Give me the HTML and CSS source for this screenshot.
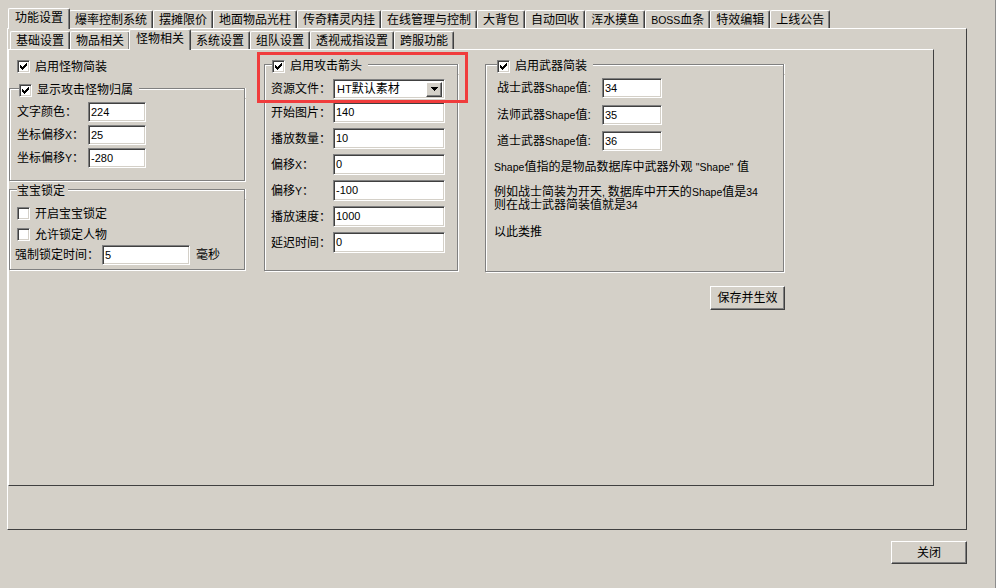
FILE: index.html
```html
<!DOCTYPE html>
<html>
<head>
<meta charset="utf-8">
<link rel="stylesheet" href="styles.css">
</head>
<body>
<div class="window">
  <div class="tabs">
    <div class="tab sel">功能设置</div>
    <div class="tab">爆率控制系统</div>
    <div class="tab">摆摊限价</div>
    <div class="tab">地面物品光柱</div>
    <div class="tab">传奇精灵内挂</div>
    <div class="tab">在线管理与控制</div>
    <div class="tab">大背包</div>
    <div class="tab">自动回收</div>
    <div class="tab">浑水摸鱼</div>
    <div class="tab"><span class="en">BOSS</span>血条</div>
    <div class="tab">特效编辑</div>
    <div class="tab">上线公告</div>
  </div>
  <div class="panel outer-panel">
    <div class="tabs">
      <div class="tab">基础设置</div>
      <div class="tab">物品相关</div>
      <div class="tab sel">怪物相关</div>
      <div class="tab">系统设置</div>
      <div class="tab">组队设置</div>
      <div class="tab">透视戒指设置</div>
      <div class="tab">跨服功能</div>
    </div>
    <div class="panel inner-panel">
      <div class="col col-left">
        <div class="check top-check"><span class="box"><svg width="7" height="7" viewBox="0 0 7 7" shape-rendering="crispEdges"><polygon points="0,2 2,4 6,0 7,0 7,3 2,7 0,5" fill="#000"/></svg></span><span>启用怪物简装</span></div>
        <div class="group">
          <div class="group-head head-g1"><span class="box"><svg width="7" height="7" viewBox="0 0 7 7" shape-rendering="crispEdges"><polygon points="0,2 2,4 6,0 7,0 7,3 2,7 0,5" fill="#000"/></svg></span><span class="gtitle">显示攻击怪物归属</span></div>
          <div class="group-body body-g1">
            <div class="field"><span class="lbl lbl-l">文字颜色：</span><span class="input in-l">224</span></div>
            <div class="field"><span class="lbl lbl-l">坐标偏移<span class="en">X</span>：</span><span class="input in-l">25</span></div>
            <div class="field"><span class="lbl lbl-l">坐标偏移<span class="en">Y</span>：</span><span class="input in-l">-280</span></div>
          </div>
        </div>
        <div class="group g2">
          <div class="group-head head-g2"><span class="gtitle">宝宝锁定</span></div>
          <div class="group-body body-g2">
            <div class="check"><span class="box"></span><span>开启宝宝锁定</span></div>
            <div class="check check-2"><span class="box"></span><span>允许锁定人物</span></div>
            <div class="field field-lock"><span class="lbl lbl-lock">强制锁定时间：</span><span class="input in-lock">5</span><span class="unit">毫秒</span></div>
          </div>
        </div>
      </div>

      <div class="col col-mid">
        <div class="group">
          <div class="group-head head-mid"><span class="box"><svg width="7" height="7" viewBox="0 0 7 7" shape-rendering="crispEdges"><polygon points="0,2 2,4 6,0 7,0 7,3 2,7 0,5" fill="#000"/></svg></span><span class="gtitle">启用攻击箭头</span></div>
          <div class="group-body body-mid">
            <div class="field"><span class="lbl lbl-m">资源文件：</span><span class="input combo"><span class="combo-text"><span class="en">HT</span>默认素材</span><span class="drop"><svg width="7" height="4" viewBox="0 0 7 4" shape-rendering="crispEdges"><polygon points="0,0 7,0 3.5,4" fill="#000"/></svg></span></span></div>
            <div class="field fm first"><span class="lbl lbl-m">开始图片：</span><span class="input in-m">140</span></div>
            <div class="field fm"><span class="lbl lbl-m">播放数量：</span><span class="input in-m">10</span></div>
            <div class="field fm"><span class="lbl lbl-m">偏移<span class="en">X</span>：</span><span class="input in-m">0</span></div>
            <div class="field fm"><span class="lbl lbl-m">偏移<span class="en">Y</span>：</span><span class="input in-m">-100</span></div>
            <div class="field fm"><span class="lbl lbl-m">播放速度：</span><span class="input in-m">1000</span></div>
            <div class="field fm"><span class="lbl lbl-m">延迟时间：</span><span class="input in-m">0</span></div>
          </div>
        </div>
      </div>

      <div class="col col-right">
        <div class="group">
          <div class="group-head head-right"><span class="box"><svg width="7" height="7" viewBox="0 0 7 7" shape-rendering="crispEdges"><polygon points="0,2 2,4 6,0 7,0 7,3 2,7 0,5" fill="#000"/></svg></span><span class="gtitle">启用武器简装</span></div>
          <div class="group-body body-right">
            <div class="field"><span class="lbl lbl-r">战士武器<span class="en">Shape</span>值:</span><span class="input in-r">34</span></div>
            <div class="field fr2"><span class="lbl lbl-r">法师武器<span class="en">Shape</span>值:</span><span class="input in-r">35</span></div>
            <div class="field fr3"><span class="lbl lbl-r">道士武器<span class="en">Shape</span>值:</span><span class="input in-r">36</span></div>
            <p class="note n1"><span class="en">Shape</span>值指的是物品数据库中武器外观 <span class="en">"Shape"</span> 值</p>
            <p class="note n2">例如战士简装为开天<span class="en">, </span>数据库中开天的<span class="en">Shape</span>值是<span class="en">34</span><br>则在战士武器简装值就是<span class="en">34</span></p>
            <p class="note n3">以此类推</p>
          </div>
        </div>
        <div class="btn btn-save">保存并生效</div>
      </div>

      <div class="annot"></div>
    </div>
  </div>
  <div class="footer"><div class="btn btn-close">关闭</div></div>
</div>
</body>
</html>
```
FILE: styles.css
```css
html, body {
  margin: 0;
  padding: 0;
  background: #d4d0c8;
}
body {
  font: 12px/14px "Liberation Sans", "Noto Sans CJK SC", sans-serif;
  color: #000;
}
.en {
  font-size: 10.5px;
}
.window {
  width: 996px;
  height: 588px;
  box-sizing: border-box;
  border-right: 1px solid #8c8c8c;
  padding: 8px 0 0 7px;
  overflow: hidden;
}

/* tabs */
.tabs {
  display: flex;
  align-items: flex-end;
  height: 20px;
  padding-left: 2px;
}
.tab {
  height: 18px;
  box-sizing: border-box;
  padding: 1px 5px 0;
  line-height: 16px;
  border-top: 1px solid #fff;
  border-left: 1px solid #fff;
  border-right: 1px solid #404040;
  box-shadow: inset -1px 0 #808080;
  border-radius: 2px 2px 0 0;
  white-space: nowrap;
  background: #d4d0c8;
}
.tab.sel {
  height: 21px;
  margin: 0 -1px -1px;
  padding: 0 6px;
  line-height: 18px;
  position: relative;
  z-index: 2;
}

/* panels */
.panel {
  box-sizing: border-box;
  border-top: 1px solid #fff;
  border-left: 1px solid #fff;
  border-right: 1px solid #404040;
  border-bottom: 1px solid #404040;
}
.outer-panel {
  width: 960px;
  height: 502px;
}
.inner-panel {
  width: 926px;
  height: 437px;
  display: flex;
  align-items: flex-start;
  position: relative;
}
.footer {
  width: 960px;
  display: flex;
  justify-content: flex-end;
  margin-top: 11px;
}

/* columns */
.col {
  display: flex;
  flex-direction: column;
}
.col-left { width: 236px; }
.col-mid { width: 194px; margin-left: 19px; }
.col-right { width: 299px; margin-left: 27px; }

/* checkbox */
.check {
  display: flex;
  align-items: center;
  height: 13px;
}
.box {
  width: 13px;
  height: 13px;
  box-sizing: border-box;
  flex: none;
  background: #fff;
  border: 1px solid;
  border-color: #808080 #fff #fff #808080;
  box-shadow: inset 1px 1px #404040, inset -1px -1px #d4d0c8;
  display: flex;
  align-items: center;
  justify-content: center;
  margin-right: 5px;
}
.box svg { display: block; }
.top-check {
  margin: 10px 0 0 8px;
}

/* group boxes */
.group {
  display: flex;
  flex-direction: column;
}
.group-head {
  display: flex;
  align-items: center;
  height: 16px;
}
.group-head::before {
  content: "";
  align-self: flex-end;
  box-sizing: border-box;
  height: 10px;
  width: 8px;
  flex: none;
  border-top: 1px solid #808080;
  border-left: 1px solid #808080;
  box-shadow: inset 1px 1px #fff;
}
.group-head::after {
  content: "";
  align-self: flex-end;
  box-sizing: border-box;
  height: 10px;
  flex: 1;
  border-top: 1px solid #808080;
  border-right: 1px solid #808080;
  box-shadow: inset 0 1px #fff, 1px 0 #fff;
}
.head-g1::before { width: 10px; }
.head-g2::before { width: 8px; }
.head-mid::before { width: 8px; }
.head-right::before { width: 12px; }
.gtitle {
  padding-right: 6px;
  white-space: nowrap;
}
.head-g2 .gtitle { padding-right: 3px; }
.group-body {
  border: 1px solid #808080;
  border-top: none;
  box-shadow: inset 1px 0 #fff, 1px 1px #fff;
  display: flex;
  flex-direction: column;
}
.col-left .group:nth-child(2) { margin-top: 9px; }
.g2 { margin-top: 2px; }
.col-mid .group, .col-right .group { margin-top: 8px; }

.body-g1 { padding: 4px 0 12px 7px; }
.body-g1 .field + .field { margin-top: 3px; }
.body-g2 { padding: 8px 0 4px 7px; }
.check-2 { margin-top: 8px; }
.field-lock { margin: 4px 0 0 -2px; }
.body-mid { padding: 5px 0 17px 6px; }
.fm { margin-top: 5px; }
.fm.first { margin-top: 3px; }
.body-right { padding: 4px 0 33px 11px; }
.fr2 { margin-top: 7px; }
.fr3 { margin-top: 6px; }

/* fields */
.field {
  display: flex;
  align-items: center;
}
.lbl {
  flex: none;
  white-space: nowrap;
}
.lbl-l { width: 71px; }
.lbl-lock { width: 87px; }
.lbl-m { width: 62px; }
.lbl-r { width: 105px; }
.unit { margin-left: 6px; }

.input {
  box-sizing: border-box;
  flex: none;
  height: 20px;
  background: #fff;
  border: 1px solid;
  border-color: #808080 #fff #fff #808080;
  box-shadow: inset 1px 1px #404040, inset -1px -1px #d4d0c8;
  padding: 2px 0 0 2px;
  font-size: 11px;
  line-height: 14px;
}
.in-l { width: 58px; }
.in-lock { width: 88px; }
.in-m { width: 112px; height: 21px; }
.in-r { width: 60px; }
.combo {
  width: 112px;
  display: flex;
  align-items: center;
  padding: 0 2px 0 3px;
  font-size: 12px;
}
.combo .en { font-size: 11px; }
.combo-text { flex: 1; white-space: nowrap; }
.drop {
  width: 16px;
  height: 15px;
  box-sizing: border-box;
  flex: none;
  background: #d4d0c8;
  border: 1px solid;
  border-color: #fff #404040 #404040 #fff;
  box-shadow: inset -1px -1px #808080;
  display: flex;
  align-items: center;
  justify-content: center;
}
.drop svg { display: block; }

/* notes */
.note {
  margin: 0 0 0 -3px;
  white-space: nowrap;
}
.n1 { margin-top: 10px; line-height: 12px; }
.n2 { margin-top: 13px; line-height: 13px; }
.n3 { margin-top: 14px; line-height: 12px; }

/* buttons */
.btn {
  box-sizing: border-box;
  background: #d4d0c8;
  border: 1px solid;
  border-color: #fff #404040 #404040 #fff;
  box-shadow: inset -1px -1px #808080;
  display: flex;
  align-items: center;
  justify-content: center;
  white-space: nowrap;
}
.btn-save {
  width: 75px;
  height: 24px;
  margin-top: 14px;
  align-self: flex-end;
  margin-right: -1px;
}
.btn-close {
  width: 76px;
  height: 23px;
}

/* annotation overlay */
.annot {
  position: absolute;
  left: 248px;
  top: 2px;
  width: 211px;
  height: 51px;
  box-sizing: border-box;
  border: 3px solid #f03c3c;
  pointer-events: none;
}
```
